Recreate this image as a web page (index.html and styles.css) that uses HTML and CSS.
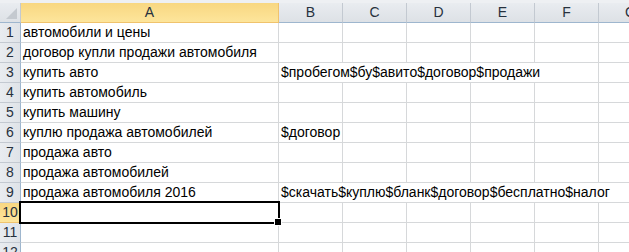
FILE: index.html
```html
<!DOCTYPE HTML>
<html>
<head>
<meta charset="utf-8">
<title>Лист1</title>
<link rel="stylesheet" href="styles.css">
</head>
<body>
	<div class="sheet">
		<div class="topline"></div>
		<!-- заголовки столбцов -->
		<div class="row head">
			<div class="corner"><span class="tri"></span></div>
			<div class="colhead active">A</div>
			<div class="colhead">B</div>
			<div class="colhead">C</div>
			<div class="colhead">D</div>
			<div class="colhead">E</div>
			<div class="colhead">F</div>
			<div class="colhead">G</div>
		</div>
		<div class="row">
			<div class="rowhead">1</div>
			<div class="cell">автомобили и цены</div>
			<div class="cell"></div><div class="cell"></div><div class="cell"></div><div class="cell"></div><div class="cell"></div><div class="cell"></div>
		</div>
		<div class="row">
			<div class="rowhead">2</div>
			<div class="cell">договор купли продажи автомобиля</div>
			<div class="cell"></div><div class="cell"></div><div class="cell"></div><div class="cell"></div><div class="cell"></div><div class="cell"></div>
		</div>
		<div class="row">
			<div class="rowhead">3</div>
			<div class="cell">купить авто</div>
			<div class="cell span5">$пробегом$бу$авито$договор$продажи</div>
			<div class="cell"></div>
		</div>
		<div class="row">
			<div class="rowhead">4</div>
			<div class="cell">купить автомобиль</div>
			<div class="cell"></div><div class="cell"></div><div class="cell"></div><div class="cell"></div><div class="cell"></div><div class="cell"></div>
		</div>
		<div class="row">
			<div class="rowhead">5</div>
			<div class="cell">купить машину</div>
			<div class="cell"></div><div class="cell"></div><div class="cell"></div><div class="cell"></div><div class="cell"></div><div class="cell"></div>
		</div>
		<div class="row">
			<div class="rowhead">6</div>
			<div class="cell">куплю продажа автомобилей</div>
			<div class="cell">$договор</div>
			<div class="cell"></div><div class="cell"></div><div class="cell"></div><div class="cell"></div><div class="cell"></div>
		</div>
		<div class="row">
			<div class="rowhead">7</div>
			<div class="cell">продажа авто</div>
			<div class="cell"></div><div class="cell"></div><div class="cell"></div><div class="cell"></div><div class="cell"></div><div class="cell"></div>
		</div>
		<div class="row">
			<div class="rowhead">8</div>
			<div class="cell">продажа автомобилей</div>
			<div class="cell"></div><div class="cell"></div><div class="cell"></div><div class="cell"></div><div class="cell"></div><div class="cell"></div>
		</div>
		<div class="row">
			<div class="rowhead">9</div>
			<div class="cell">продажа автомобиля 2016</div>
			<div class="cell span6">$скачать$куплю$бланк$договор$бесплатно$налог</div>
		</div>
		<div class="row">
			<div class="rowhead active">10</div>
			<div class="cell selected"></div>
			<div class="cell"></div><div class="cell"></div><div class="cell"></div><div class="cell"></div><div class="cell"></div><div class="cell"></div>
		</div>
		<div class="row">
			<div class="rowhead">11</div>
			<div class="cell"></div>
			<div class="cell"></div><div class="cell"></div><div class="cell"></div><div class="cell"></div><div class="cell"></div><div class="cell"></div>
		</div>
		<div class="row">
			<div class="rowhead">12</div>
			<div class="cell"></div>
			<div class="cell"></div><div class="cell"></div><div class="cell"></div><div class="cell"></div><div class="cell"></div><div class="cell"></div>
		</div>
	</div>
</body>
</html>
```

FILE: styles.css
```css
*{
	margin: 0;
	padding: 0;
	box-sizing: border-box;
}

body{
	background: #fff;
	font-family: "Liberation Sans", Arial, sans-serif;
	overflow: hidden;
}

.sheet{
	width: 629px;
	height: 252px;
	overflow: hidden;
}
.topline{
	height: 3px;
	background: #eef0f3;
}

/* все строки на одной сетке столбцов, столбец G уходит за край */
.row{
	display: grid;
	grid-template-columns: 21px 258px 64px 64px 64px 64px 64px 64px;
	height: 20px;
}

.cell{
	border-right: 1px solid #d6d8da;
	border-bottom: 1px solid #d6d8da;
	font-size: 14px;
	line-height: 19px;
	padding-left: 2px;
	color: #000;
	white-space: nowrap;
	overflow: visible;
}
.span5{
	grid-column: span 5;
}
.span6{
	grid-column: span 6;
}

/* заголовки */
.head .colhead,
.corner{
	background: linear-gradient(#e9ecf0, #dde1e6);
	border-right: 1px solid #c3c9d1;
	border-bottom: 1px solid #9eb6ce;
	text-align: center;
	font-size: 14px;
	line-height: 19px;
	color: #27313d;
}
.head .colhead.active{
	background: linear-gradient(#f8d781, #fde59b);
	border-right-color: #f0c36d;
	border-bottom-color: #f0c36d;
}
.corner{
	position: relative;
}
.tri{
	position: absolute;
	right: 3px;
	bottom: 3px;
	width: 0;
	height: 0;
	border-left: 11px solid transparent;
	border-bottom: 11px solid #c4c9cf;
}

.rowhead{
	background: linear-gradient(90deg, #e9ecf0, #dfe3e8);
	border-right: 1px solid #9eb6ce;
	border-bottom: 1px solid #c3c9d1;
	text-align: center;
	font-size: 14px;
	line-height: 19px;
	color: #27313d;
}
.rowhead.active{
	background: linear-gradient(#f8d781, #fde59b);
	border-bottom-color: #f0c36d;
}

/* активная ячейка A10 */
.selected{
	position: relative;
}
.selected::after{
	content: "";
	position: absolute;
	left: -2px;
	top: -2px;
	right: -2px;
	bottom: -2px;
	border: 2px solid #000;
}
.selected::before{
	content: "";
	position: absolute;
	right: -4px;
	bottom: -4px;
	width: 6px;
	height: 6px;
	background: #000;
	border: 1px solid #fff;
	z-index: 1;
}
```
